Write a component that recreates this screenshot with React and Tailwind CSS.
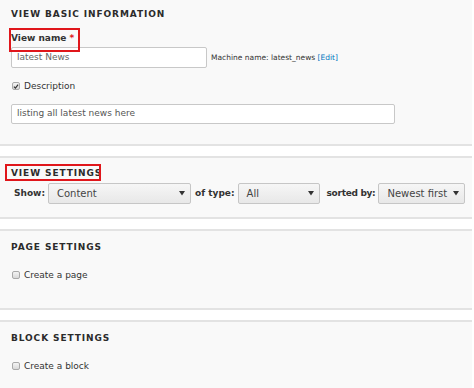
import React from 'react';

const font = { fontFamily: '"DejaVu Sans", Verdana, sans-serif' };

function Heading({ children }) {
  return (
    <h2 className="text-[9px] leading-[12px] font-bold uppercase tracking-[0.9px] text-[#2b2b2b]">
      {children}
    </h2>
  );
}

function Checkbox({ checked }) {
  return (
    <span className="flex items-center justify-center w-[8px] h-[8px] rounded-[2px] border border-[#a9a9a9] bg-gradient-to-b from-[#f4f4f4] to-[#d9d9d9]">
      {checked && (
        <svg width="7" height="7" viewBox="0 0 8 8">
          <path d="M1.2 4.2 L3.2 6.2 L6.8 1.4" fill="none" stroke="#333" strokeWidth="1.6" />
        </svg>
      )}
    </span>
  );
}

function Select({ value, width }) {
  return (
    <div
      className={`flex items-center justify-between h-[21px] pl-[8px] pr-[5px] rounded-[2px] border border-[#c6c6c6] bg-gradient-to-b from-[#f6f6f6] to-[#e8e8e8] text-[10px] text-[#444] ${width}`}
    >
      <span>{value}</span>
      <svg width="6" height="5" viewBox="0 0 6 5">
        <path d="M0 0 L6 0 L3 4.5 Z" fill="#333" />
      </svg>
    </div>
  );
}

function Section({ first, className, children }) {
  return (
    <section
      className={`w-[472px] bg-[#f9f9f9] border-b-2 border-[#e3e3e3] ${first ? '' : 'border-t-2 mt-[10px]'} ${className}`}
    >
      {children}
    </section>
  );
}

export default function App() {
  return (
    <div className="w-[474px] h-[388px] overflow-hidden bg-white text-[#333]" style={font}>
      {/* basic information */}
      <Section first className="pt-[8px] pb-[20px] pl-[11px]">
        <Heading>View basic information</Heading>

        <div className="relative mt-[12px] text-[9px] leading-[12px] font-bold">
          View name <span className="text-[#e0161b]">*</span>
          <div className="absolute left-[-2px] top-[-4px] w-[71px] h-[24px] border-2 border-[#e0161b]" />
        </div>

        <div className="flex items-center mt-[3px]">
          <div className="flex items-center w-[196px] h-[21px] pl-[5px] bg-white border border-[#c8c8c8] rounded-[2px] text-[9px] text-[#666]">
            latest News
          </div>
          <span className="ml-[4px] text-[7.5px] text-[#333]">
            Machine name: latest_news <span className="text-[#0074bd]">[Edit]</span>
          </span>
        </div>

        <label className="flex items-center gap-[4px] mt-[12px] text-[9px] leading-[12px] pl-[1px]">
          <Checkbox checked />
          Description
        </label>

        <div className="flex items-center w-[384px] h-[20px] mt-[12px] pl-[5px] bg-white border border-[#c8c8c8] rounded-[2px] text-[9px] text-[#555]">
          listing all latest news here
        </div>
      </Section>

      {/* view settings */}
      <Section className="pt-[9px] pb-[13px]">
        <div className="relative pl-[11px]">
          <Heading>View settings</Heading>
          <div className="absolute left-[5px] top-[-3px] w-[96px] h-[17px] border-2 border-[#e0161b]" />
        </div>
        <div className="flex items-center mt-[4px] pl-[14px] text-[9px] font-bold">
          <span>Show:</span>
          <div className="ml-[3px] font-normal">
            <Select value="Content" width="w-[143px]" />
          </div>
          <span className="ml-[4px]">of type:</span>
          <div className="ml-[3px] font-normal">
            <Select value="All" width="w-[82px]" />
          </div>
          <span className="ml-[7px] tracking-[-0.3px]">sorted by:</span>
          <div className="ml-[3px] font-normal">
            <Select value="Newest first" width="w-[87px]" />
          </div>
        </div>
      </Section>

      {/* page settings */}
      <Section className="pt-[10px] pb-[27px] pl-[11px]">
        <Heading>Page settings</Heading>
        <label className="flex items-center gap-[4px] mt-[16px] text-[9px] leading-[12px] pl-[1px]">
          <Checkbox />
          Create a page
        </label>
      </Section>

      {/* block settings */}
      <Section className="pt-[10px] pb-[27px] pl-[11px]">
        <Heading>Block settings</Heading>
        <label className="flex items-center gap-[4px] mt-[16px] text-[9px] leading-[12px] pl-[1px]">
          <Checkbox />
          Create a block
        </label>
      </Section>
    </div>
  );
}
